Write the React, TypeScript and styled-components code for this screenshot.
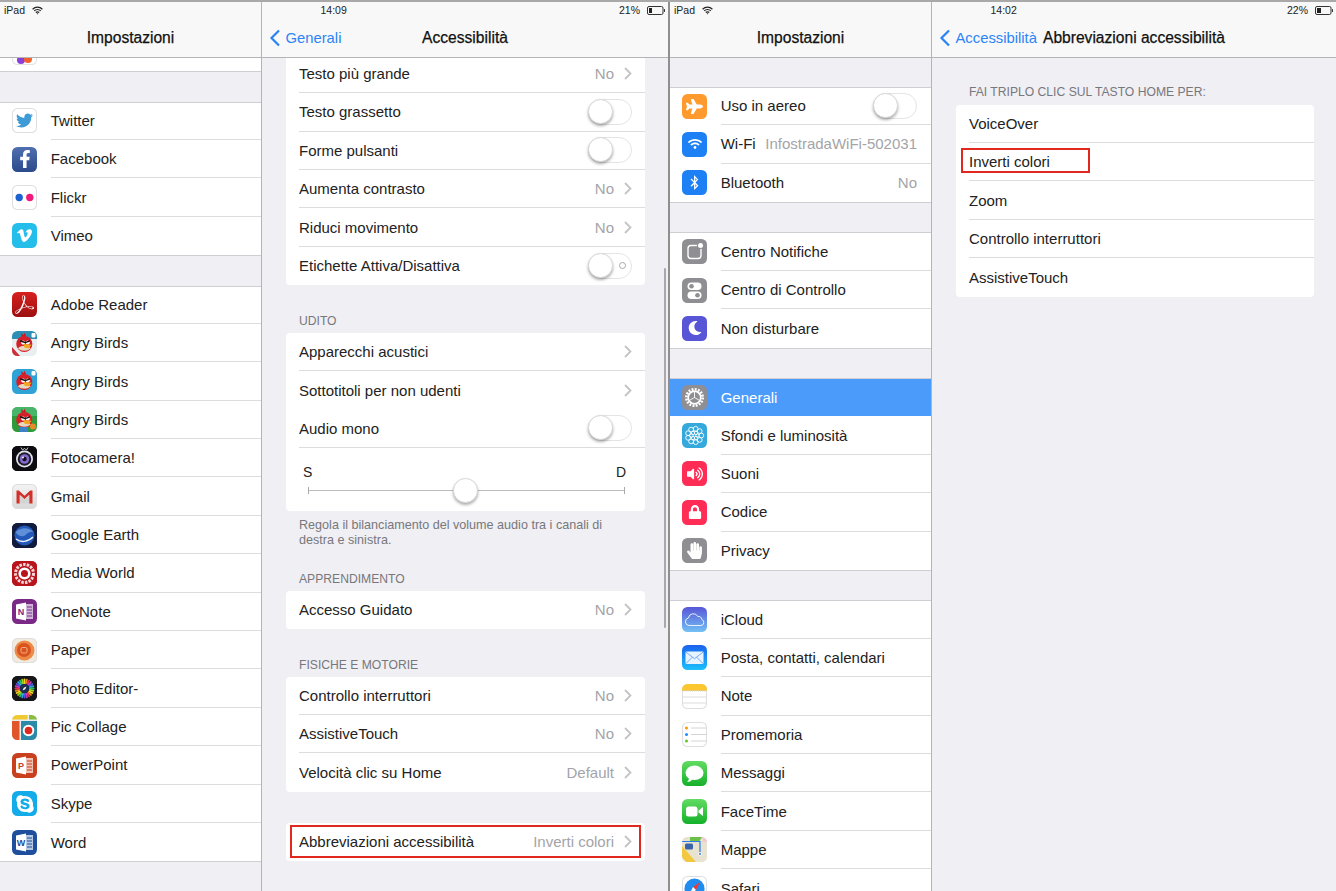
import React from 'react';
import styled, { createGlobalStyle } from 'styled-components';
import {
  FaBluetoothB,
  FaFacebookF,
  FaHandPaper,
  FaLock,
  FaMoon,
  FaPlane,
  FaSkype,
  FaTwitter,
  FaVimeoV,
  FaVolumeUp,
  FaWifi,
} from 'react-icons/fa';
import { SiAdobeacrobatreader } from 'react-icons/si';

const GlobalStyle = createGlobalStyle`
  html, body {
    margin: 0;
    height: 100%;
    overflow: hidden;
    background: #efeff4;
  }
  body {
    font-family: "Liberation Sans", Arial, sans-serif;
    color: #222;
    -webkit-font-smoothing: antialiased;
  }
`;

const Page = styled.div`
  display: flex;
  width: 1336px;
  height: 891px;
  border-top: 2px solid #a9a9a9;
  box-sizing: border-box;
  overflow: hidden;
`;

const Screen = styled.div<{ $divider?: boolean }>`
  position: relative;
  display: flex;
  width: ${(p) => (p.$divider ? '670px' : '666px')};
  height: 100%;
  flex: none;
  box-sizing: border-box;
  border-right: ${(p) => (p.$divider ? '2px solid #8f8f8f' : 'none')};
`;

const Sidebar = styled.div`
  width: 262px;
  flex: none;
  box-sizing: border-box;
  border-right: 1px solid #b4b4b6;
  overflow: hidden;
  display: flex;
  flex-direction: column;
`;

const Detail = styled.div`
  flex: 1;
  min-width: 0;
  overflow: hidden;
  display: flex;
  flex-direction: column;
`;

const Header = styled.header`
  position: relative;
  z-index: 2;
  height: 56px;
  flex: none;
  box-sizing: border-box;
  background: #f8f8f8;
  border-bottom: 1px solid #b4b4b6;
`;

const Status = styled.div<{ $side?: boolean }>`
  height: 16px;
  display: flex;
  align-items: center;
  justify-content: ${(p) => (p.$side ? 'flex-start' : 'space-between')};
  gap: 7px;
  padding: ${(p) => (p.$side ? '0 0 0 4px' : '0 3px 0 58.5px')};
  font-size: 10.5px;
  color: #222;
`;

const Battery = styled.span`
  display: flex;
  align-items: center;
  gap: 7px;
`;

const Nav = styled.div`
  height: 39px;
  display: grid;
  grid-template-columns: 1fr auto 1fr;
  align-items: center;
`;

const Back = styled.span`
  display: flex;
  align-items: center;
  gap: 4.5px;
  padding-left: 7px;
  font-size: 14.8px;
  color: #2b84f6;
  white-space: nowrap;
`;

const Title = styled.h1`
  grid-column: 2;
  margin: 0;
  font-size: 15.6px;
  font-weight: 400;
  -webkit-text-stroke: 0.25px #111;
  color: #111;
  white-space: nowrap;
`;

const Gap = styled.div<{ $h?: number }>`
  height: ${(p) => p.$h ?? 30.4}px;
  flex: none;
`;

const Group = styled.div`
  position: relative;
  background: #fff;
  flex: none;
  box-shadow: 0 1px 0 #cfcfd3;

  &::before {
    content: '';
    position: absolute;
    top: 0;
    left: 0;
    right: 0;
    height: 1px;
    background: #cfcfd3;
  }
`;

const ClippedRow = styled.div`
  height: 12.9px;
  background: #fff;
  flex: none;
  padding-left: 12.3px;
  display: flex;
  align-items: flex-end;
  overflow: hidden;
  box-shadow: 0 1px 0 #cfcfd3;
`;

const ClippedIcon = styled.div`
  width: 25px;
  height: 25px;
  flex: none;
  margin-bottom: 6px;
  border-radius: 5.5px;
  box-shadow: inset 0 0 0 1px #e2e2e2;
`;

const Row = styled.div<{ $selected?: boolean }>`
  height: 38.4px;
  display: flex;
  align-items: center;
  padding-left: 12.3px;
  gap: 13.4px;
  background: ${(p) => (p.$selected ? '#4b9bfb' : '#fff')};
  color: ${(p) => (p.$selected ? '#fff' : 'inherit')};
`;

const RowBody = styled.div<{ $plain?: boolean }>`
  flex: 1;
  min-width: 0;
  height: 100%;
  box-sizing: border-box;
  display: flex;
  align-items: center;
  justify-content: space-between;
  padding-right: 14px;
  font-size: 15px;
  white-space: nowrap;
  border-bottom: ${(p) => (p.$plain ? 'none' : '1.5px solid #dcdcde')};
`;

const Value = styled.span`
  color: #a4a4a8;
`;

const Tile = styled.div<{ $bg: string; $ink?: string; $line?: boolean }>`
  width: 25px;
  height: 25px;
  flex: none;
  display: flex;
  align-items: center;
  justify-content: center;
  overflow: hidden;
  color: ${(p) => p.$ink ?? '#fff'};
  background: ${(p) => p.$bg};
  border-radius: 5.5px;
  box-shadow: ${(p) => (p.$line ? 'inset 0 0 0 1px #dedee0' : 'none')};

  svg {
    display: block;
  }
`;

const Content = styled.div<{ $shift?: number; $end?: number }>`
  padding: 0 ${(p) => p.$end ?? 22}px 0 24px;
  margin-top: ${(p) => p.$shift ?? 0}px;
`;

const Card = styled.div`
  background: #fff;
  border-radius: 4px;
  overflow: hidden;
`;

const Cell = styled.div`
  position: relative;
  height: 38.4px;
  padding-left: 13px;
`;

const CellBody = styled.div<{ $last?: boolean }>`
  height: 100%;
  box-sizing: border-box;
  display: flex;
  align-items: center;
  justify-content: space-between;
  padding-right: 13px;
  font-size: 15px;
  border-bottom: ${(p) => (p.$last ? 'none' : '1.5px solid #dcdcde')};
`;

const Trailing = styled.span`
  display: flex;
  align-items: center;
  gap: 10px;
`;

const SectionLabel = styled.div<{ $h?: number; $pb?: number }>`
  height: ${(p) => p.$h ?? 47.6}px;
  box-sizing: border-box;
  display: flex;
  align-items: flex-end;
  padding: 0 0 ${(p) => p.$pb ?? 3.5}px 13px;
  font-size: 12.15px;
  line-height: 16px;
  color: #77777c;
  text-transform: uppercase;
`;

const Note = styled.div`
  padding: 7.5px 13px 0;
  margin-bottom: -3.8px;
  font-size: 12.6px;
  line-height: 14.4px;
  color: #77777c;
`;

const Track = styled.div`
  position: relative;
  width: 44px;
  height: 26px;
  margin-right: 0.5px;
  flex: none;
  box-sizing: border-box;
  border: 1.5px solid #e4e4e6;
  border-radius: 13px;
  background: #fff;
`;

const Knob = styled.span`
  position: absolute;
  top: -1px;
  left: -1px;
  width: 25px;
  height: 25px;
  box-sizing: border-box;
  border-radius: 50%;
  background: #fff;
  border: 1px solid #d8d8da;
  box-shadow: 0 2px 3px rgba(0, 0, 0, 0.32);
`;

const OffMark = styled.span`
  position: absolute;
  top: 8px;
  right: 5px;
  width: 7px;
  height: 7px;
  box-sizing: border-box;
  border: 1.2px solid #a8a8a8;
  border-radius: 50%;
`;

const BalanceCell = styled.div`
  height: 62.7px;
  box-sizing: border-box;
  padding: 16px 19px 0 17px;
`;

const BalanceEnds = styled.div`
  display: flex;
  justify-content: space-between;
  font-size: 14px;
  line-height: 16px;
`;

const BalanceTrack = styled.div`
  position: relative;
  margin: 10px 1px 0 5px;
  height: 1px;
  background: #bdbdbd;

  &::before,
  &::after {
    content: '';
    position: absolute;
    top: -3px;
    width: 1px;
    height: 7px;
    background: #aaa;
  }
  &::before {
    left: 0;
  }
  &::after {
    right: 0;
  }
`;

const BalanceKnob = styled.span`
  position: absolute;
  top: -12px;
  left: 145px;
  width: 25px;
  height: 25px;
  box-sizing: border-box;
  border-radius: 50%;
  background: #fff;
  border: 1px solid #d8d8da;
  box-shadow: 0 2px 3px rgba(0, 0, 0, 0.32);
`;

const Highlight = styled.div<{ $wide?: boolean }>`
  position: absolute;
  top: ${(p) => (p.$wide ? '2px' : '5px')};
  left: ${(p) => (p.$wide ? '4px' : '5px')};
  width: ${(p) => (p.$wide ? '351px' : '129px')};
  height: ${(p) => (p.$wide ? '33.5px' : '25px')};
  box-sizing: border-box;
  border: 2px solid #e0281e;
`;

const Scrollbar = styled.div`
  position: absolute;
  top: 266px;
  right: 2px;
  width: 2.5px;
  height: 360px;
  border-radius: 2px;
  background: #a9a9ad;
`;

const Wifi = () => (
  <svg width="11" height="9" viewBox="0 0 11 9" fill="none" stroke="#222" strokeWidth="1.2">
    <path d="M.6 3.2a7 7 0 0 1 9.8 0M2.2 4.9a4.7 4.7 0 0 1 6.6 0M3.8 6.5a2.4 2.4 0 0 1 3.4 0" />
    <path d="M5.5 8.6 4.6 7.6a1.3 1.3 0 0 1 1.8 0z" fill="#222" stroke="none" />
  </svg>
);

const BatteryIcon = ({ level }: { level: number }) => (
  <svg width="18" height="9" viewBox="0 0 18 9">
    <rect x=".5" y=".5" width="15.5" height="8" rx="1.5" fill="none" stroke="#333" />
    <rect x="2" y="2" width={level} height="5" fill="#222" />
    <path d="M17 3v3a1.5 1.5 0 0 0 0-3z" fill="#333" />
  </svg>
);

const BackChevron = () => (
  <svg width="12" height="18" viewBox="0 0 12 18" fill="none" stroke="#2b84f6" strokeWidth="2.2">
    <path d="M10 1.5 2.5 9l7.5 7.5" />
  </svg>
);

const Chevron = () => (
  <svg width="8" height="13" viewBox="0 0 8 13" fill="none" stroke="#c4c4c8" strokeWidth="1.8">
    <path d="m1 1 5.5 5.5L1 12" />
  </svg>
);

const Art = ({ children }: { children: React.ReactNode }) => (
  <svg width="25" height="25" viewBox="0 0 25 25">
    {children}
  </svg>
);

const Bird = () => (
  <g transform="translate(-1.5 -2) scale(1.15)">
    <path d="M10 7 9 3.5l2.500 2L12 3l1.500 3z" fill="#c8181e" />
    <circle cx="12" cy="13" r="7" fill="#d5202a" />
    <path d="M6.500 17a7 5 0 0 0 11 0 6 4 0 0 0-11 0z" fill="#e8d8c0" />
    <circle cx="11" cy="11.800" r="1.800" fill="#fff" />
    <circle cx="15" cy="11.800" r="1.800" fill="#fff" />
    <path d="M8.500 9.500 12.800 11l1-.2 3.200-1.300-.2 1.500-4 1.300-4.500-1.300z" fill="#201410" />
    <path d="m11.500 13 7 .8-3 3.200-3.500-1z" fill="#f0a820" />
  </g>
);

const BirdBlue = () => (
  <Art>
    <rect width="25" height="25" fill="#2fa3d6" />
    <Bird />
    <rect x="19.500" y="2" width="4" height="4.500" rx="1" fill="#fff" />
  </Art>
);

const BirdClassic = () => (
  <Art>
    <rect width="25" height="25" fill="#e9eef0" />
    <path d="M0 0h25v8H0z" fill="#2d8fb4" />
    <path d="M0 16 8 25H0z" fill="#c9303a" />
    <Bird />
    <rect x="19.500" y="2" width="4" height="4.500" rx="1" fill="#fff" />
  </Art>
);

const BirdRio = () => (
  <Art>
    <rect width="25" height="25" fill="#2f9a3c" />
    <path d="M0 0h25v9H0z" fill="#47b56a" />
    <Bird />
    <path d="M8 25v-5h8v5z" fill="#3d82c8" />
    <circle cx="21" cy="19.500" r="3" fill="#e88a2a" />
  </Art>
);

const Fotocamera = () => (
  <Art>
    <rect width="25" height="25" fill="#0c0c10" />
    <circle cx="12.500" cy="13" r="8.500" fill="#e4e4ec" />
    <circle cx="12.500" cy="13" r="6.800" fill="#1c1c28" />
    <circle cx="12.500" cy="13" r="4.800" fill="#8468cc" />
    <circle cx="12.500" cy="13" r="2.200" fill="#101018" />
    <circle cx="11" cy="11.500" r=".9" fill="#fff" />
    <path d="m9 1.500 1.500 2.500L12.500 2.500l2 1.500L16 1.500" fill="none" stroke="#ddd" strokeWidth=".9" />
  </Art>
);

const Gmail = () => (
  <Art>
    <path d="M4.500 6.500v13h3.300V11l4.700 4.200L17.200 11v8.500h3.300v-13h-2.300l-5.700 5.200-5.700-5.200z" fill="#d3302a" />
    <path d="M7.800 11v8.500h9.400V11l-4.700 4.200z" fill="#d4d4d4" />
  </Art>
);

const Earth = () => (
  <Art>
    <rect width="25" height="25" fill="#101b3e" />
    <circle cx="12.500" cy="12.500" r="10" fill="#2258b8" />
    <path d="M3.500 9c6-5 13-5 18 0-3-1-6 1-8 3s-7 2-10-3z" fill="#5f8fd8" />
    <path d="M4 16c5 4 12 3 17-2" fill="none" stroke="#eaf1fb" strokeWidth="1.400" />
  </Art>
);

const MediaWorld = () => (
  <Art>
    <rect width="25" height="25" fill="#b8141c" />
    <circle cx="12.500" cy="12.500" r="9" fill="none" stroke="#f6d8d8" strokeWidth="3" strokeDasharray="2.500 1.200" />
    <circle cx="12.500" cy="12.500" r="4.800" fill="none" stroke="#fff" strokeWidth="2.600" />
  </Art>
);

const OfficeDoc = ({ letter, page, ink }: { letter: string; page: string; ink: string }) => (
  <Art>
    <path d="M10 5h11v15H10z" fill={page} opacity=".9" />
    <path d="M15 8h5M15 11h5M15 14h5M15 17h5" stroke={ink} strokeWidth="1" />
    <path d="M4 5.500 14 3.500v18l-10-2z" fill="#fff" />
    <text x="9" y="16" textAnchor="middle" fontSize="9" fontWeight="700" fontFamily="Liberation Sans" fill={ink}>
      {letter}
    </text>
  </Art>
);

const Paper = () => (
  <Art>
    <circle cx="12.500" cy="12.500" r="10" fill="#ec8a4a" />
    <circle cx="12" cy="12" r="7" fill="#d9531f" />
    <rect x="9" y="9.500" width="6" height="5.500" rx="1.500" fill="none" stroke="#f4b28a" />
  </Art>
);

const PhotoEditor = () => {
  const colors = ['#f4d820', '#f08a20', '#e8304a', '#c83cc0', '#5a55e0', '#26a8e8', '#30c060', '#a0d820'];
  const petals = Array.from({ length: 24 }, (_, i) => i * 15);
  return (
    <Art>
      <rect width="25" height="25" fill="#15151a" />
      {petals.map((deg, i) => (
        <rect
          key={deg}
          x="11.600"
          y="2.500"
          width="1.800"
          height="5.500"
          rx=".9"
          fill={colors[i % colors.length]}
          transform={`rotate(${deg} 12.500 12.500)`}
        />
      ))}
      <circle cx="12.500" cy="12.500" r="4.600" fill="#1b2f50" />
      <path d="m10.500 14.500 1.300-2.700 2.700-1.300-1.300 2.700z" fill="#fff" />
    </Art>
  );
};

const PicCollage = () => (
  <Art>
    <rect width="25" height="25" fill="#e8eef0" />
    <path d="M0 0h15.500v4.500H0z" fill="#f0c830" />
    <path d="M17 0h8v4.500h-8z" fill="#8abc40" />
    <path d="M0 6h7.500v19H0z" fill="#e0552a" />
    <path d="M9 6h16v19H9z" fill="#2a8aa8" />
    <circle cx="16.500" cy="15.500" r="5.800" fill="#fff" />
    <circle cx="16.500" cy="15.500" r="3.800" fill="#dd2a20" />
  </Art>
);

const Flickr = () => (
  <Art>
    <circle cx="7.200" cy="12.500" r="3.700" fill="#1c62d0" />
    <circle cx="17.800" cy="12.500" r="3.700" fill="#f01a7c" />
  </Art>
);

const Notifications = () => (
  <Art>
    <rect x="6" y="6.500" width="13" height="13" rx="3" fill="none" stroke="#fff" strokeWidth="1.400" />
    <circle cx="18.500" cy="6.500" r="3.600" fill="#8e8e93" />
    <circle cx="18.500" cy="6.500" r="2.500" fill="#fff" />
  </Art>
);

const ControlCenter = () => (
  <Art>
    <rect x="5.500" y="4.500" width="14" height="7.500" rx="3.750" fill="#fff" />
    <circle cx="9.500" cy="8.250" r="2.300" fill="#8e8e93" />
    <rect x="5.500" y="13.500" width="14" height="7.500" rx="3.750" fill="#fff" />
    <circle cx="15.500" cy="17.250" r="2.300" fill="#8e8e93" />
  </Art>
);

const Gear = () => (
  <Art>
    <circle cx="12.500" cy="12.500" r="8.200" fill="none" stroke="#fff" strokeWidth="2.600" strokeDasharray="1.900 1.320" />
    <circle cx="12.500" cy="12.500" r="6.300" fill="none" stroke="#fff" strokeWidth="1.700" />
    <path d="M12.500 12.500V6.500M12.500 12.500l5.200 3M12.500 12.500l-5.200 3" stroke="#fff" strokeWidth=".9" />
  </Art>
);

const Wallpaper = () => {
  const ring = Array.from({ length: 9 }, (_, i) => (i * Math.PI * 2) / 9);
  return (
    <Art>
      {ring.map((a) => (
        <circle
          key={a}
          cx={12.5 + Math.cos(a) * 6.8}
          cy={12.5 + Math.sin(a) * 6.8}
          r="2.400"
          fill="none"
          stroke="#fff"
          strokeWidth=".9"
        />
      ))}
      {ring.slice(0, 6).map((a) => (
        <circle
          key={a}
          cx={12.5 + Math.cos(a * 1.5) * 3}
          cy={12.5 + Math.sin(a * 1.5) * 3}
          r="1.700"
          fill="none"
          stroke="#fff"
          strokeWidth=".9"
        />
      ))}
    </Art>
  );
};

const Cloud = () => (
  <Art>
    <path
      d="M7 18.500a3.800 3.800 0 0 1-.6-7.500 5 5 0 0 1 9.400-1.500 3.300 3.300 0 0 1 4 3 3.100 3.100 0 0 1-.8 6z"
      fill="none"
      stroke="#e8f2ff"
      strokeWidth="1"
    />
  </Art>
);

const Envelope = () => (
  <Art>
    <rect x="3.500" y="6.500" width="18" height="12.500" rx="1" fill="#e8f3ff" />
    <path d="m3.800 7 8.700 6.700L21.200 7M3.800 18.700l6.500-6.500M21.200 18.700l-6.500-6.500" fill="none" stroke="#4f9cf5" strokeWidth=".8" />
  </Art>
);

const Notes = () => (
  <Art>
    <path d="M0 0h25v7H0z" fill="#fbc62e" />
    <path d="M0 7h25" stroke="#d8d8d8" strokeDasharray="1 1" />
    <path d="M0 13h25M0 19h25" stroke="#dcdcdc" />
  </Art>
);

const Reminders = () => (
  <Art>
    <circle cx="4.500" cy="6" r="1.500" fill="#ff9500" />
    <circle cx="4.500" cy="12.500" r="1.500" fill="#1e90f5" />
    <circle cx="4.500" cy="19" r="1.500" fill="#62c828" />
    <path d="M9 6h16M9 12.500h16M9 19h16" stroke="#d4d4d6" />
  </Art>
);

const Bubble = () => (
  <Art>
    <ellipse cx="12.500" cy="11.800" rx="9" ry="7.300" fill="#fff" />
    <path d="M7 16.500c0 2-.8 3.500-2.200 4.500 2.200 0 4.200-.8 5.700-2.500z" fill="#fff" />
  </Art>
);

const Camera = () => (
  <Art>
    <rect x="4" y="7.500" width="11.500" height="10" rx="2.500" fill="#fff" />
    <path d="m16.500 11.500 4.500-3.500v9l-4.500-3.500z" fill="#fff" />
  </Art>
);

const Maps = () => (
  <Art>
    <rect width="25" height="25" fill="#e8e2d0" />
    <path d="M8 0h12l-3 5H8z" fill="#6cc048" />
    <path d="M20 0h5v5h-4z" fill="#f4c8d0" />
    <path d="M0 9 14 25H4L0 20z" fill="#f2c840" />
    <path d="M0 4.500h18v11" fill="none" stroke="#2a7ae8" strokeWidth="1.200" />
    <rect x="3" y="6.500" width="8" height="6" rx="1.500" fill="#3b63a8" />
    <circle cx="18" cy="17" r="1.800" fill="#fff" />
    <circle cx="18" cy="17" r="1" fill="#2a7ae8" />
  </Art>
);

const Safari = () => (
  <Art>
    <circle cx="12.500" cy="12.500" r="10" fill="#1f8cf0" />
    <path d="m18 6-4 8-3-3z" fill="#f03a30" />
    <path d="m7 19 4-8 3 3z" fill="#fff" />
  </Art>
);

type Entry = { label: string; icon: React.ReactNode; value?: string };

const grey = '#8e8e93';
const glyph = (Icon: React.ComponentType<{ size?: number }>, bg: string, size = 14) => (
  <Tile $bg={bg}>
    <Icon size={size} />
  </Tile>
);
const art = (node: React.ReactNode, bg: string, line = false) => (
  <Tile $bg={bg} $line={line}>
    {node}
  </Tile>
);

const socialApps: Entry[] = [
  { label: 'Twitter', icon: <Tile $bg="#fff" $ink="#3f9bd6" $line><FaTwitter size={17} /></Tile> },
  { label: 'Facebook', icon: glyph(FaFacebookF, 'linear-gradient(#4f6fb0, #2b4a8c)', 18) },
  { label: 'Flickr', icon: art(<Flickr />, '#fff', true) },
  { label: 'Vimeo', icon: glyph(FaVimeoV, '#25bde9', 17) },
];

const installedApps: Entry[] = [
  { label: 'Adobe Reader', icon: glyph(SiAdobeacrobatreader, 'linear-gradient(#d8211f, #9c0f10)', 19) },
  { label: 'Angry Birds', icon: art(<BirdClassic />, '#fff') },
  { label: 'Angry Birds', icon: art(<BirdBlue />, '#fff') },
  { label: 'Angry Birds', icon: art(<BirdRio />, '#fff') },
  { label: 'Fotocamera!', icon: art(<Fotocamera />, '#000') },
  { label: 'Gmail', icon: art(<Gmail />, 'linear-gradient(#f4f4f4, #d8d8d8)', true) },
  { label: 'Google Earth', icon: art(<Earth />, '#101b3e') },
  { label: 'Media World', icon: art(<MediaWorld />, '#b8141c') },
  { label: 'OneNote', icon: art(<OfficeDoc letter="N" page="#d9c6e2" ink="#7a2a86" />, '#7a2a86') },
  { label: 'Paper', icon: art(<Paper />, '#f0ebdd', true) },
  { label: 'Photo Editor-', icon: art(<PhotoEditor />, '#15151a') },
  { label: 'Pic Collage', icon: art(<PicCollage />, '#e8eef0') },
  { label: 'PowerPoint', icon: art(<OfficeDoc letter="P" page="#f3d2c6" ink="#c8401e" />, '#c8401e') },
  { label: 'Skype', icon: glyph(FaSkype, '#14ace8', 20) },
  { label: 'Word', icon: art(<OfficeDoc letter="W" page="#c8d6ea" ink="#1f4f9c" />, '#1f4f9c') },
];

const connectivity: Entry[] = [
  { label: 'Uso in aereo', icon: glyph(FaPlane, '#ff9a2e', 17) },
  { label: 'Wi-Fi', icon: glyph(FaWifi, '#1e80f5', 14), value: 'InfostradaWiFi-502031' },
  { label: 'Bluetooth', icon: glyph(FaBluetoothB, '#1e80f5', 15), value: 'No' },
];

const systemApps: Entry[] = [
  { label: 'Centro Notifiche', icon: art(<Notifications />, grey) },
  { label: 'Centro di Controllo', icon: art(<ControlCenter />, grey) },
  { label: 'Non disturbare', icon: glyph(FaMoon, '#5856d6', 14) },
];

const generalApps: Entry[] = [
  { label: 'Generali', icon: art(<Gear />, grey) },
  { label: 'Sfondi e luminosità', icon: art(<Wallpaper />, '#35a9dc') },
  { label: 'Suoni', icon: glyph(FaVolumeUp, '#ff2d55', 16) },
  { label: 'Codice', icon: glyph(FaLock, '#ff2d55', 14) },
  { label: 'Privacy', icon: glyph(FaHandPaper, grey, 17) },
];

const cloudApps: Entry[] = [
  { label: 'iCloud', icon: art(<Cloud />, 'linear-gradient(#5856d6, #72c0f5)') },
  { label: 'Posta, contatti, calendari', icon: art(<Envelope />, 'linear-gradient(#1a62ee, #1cc0fb)') },
  { label: 'Note', icon: art(<Notes />, '#fff', true) },
  { label: 'Promemoria', icon: art(<Reminders />, '#fff', true) },
  { label: 'Messaggi', icon: art(<Bubble />, 'linear-gradient(#62dc62, #14b02a)') },
  { label: 'FaceTime', icon: art(<Camera />, 'linear-gradient(#62dc62, #14b02a)') },
  { label: 'Mappe', icon: art(<Maps />, '#e8e2d0') },
  { label: 'Safari', icon: art(<Safari />, '#fff', true) },
];

const Toggle = ({ mark }: { mark?: boolean }) => (
  <Track>
    <Knob />
    {mark && <OffMark />}
  </Track>
);

const SettingRows = ({ items, selected, trailing }: { items: Entry[]; selected?: string; trailing?: Record<string, React.ReactNode> }) => (
  <Group>
    {items.map((item, i) => (
      <Row key={`${item.label}${i}`} $selected={item.label === selected}>
        {item.icon}
        <RowBody $plain={i === items.length - 1 || item.label === selected}>
          {item.label}
          {item.value && <Value>{item.value}</Value>}
          {trailing?.[item.label]}
        </RowBody>
      </Row>
    ))}
  </Group>
);

type Line = { label: string; value?: string; toggle?: boolean; mark?: boolean };

const Lines = ({ items }: { items: Line[] }) => (
  <>
    {items.map((line, i) => (
      <Cell key={line.label}>
        <CellBody $last={i === items.length - 1}>
          {line.label}
          {line.toggle ? (
            <Toggle mark={line.mark} />
          ) : (
            <Trailing>
              {line.value && <Value>{line.value}</Value>}
              <Chevron />
            </Trailing>
          )}
        </CellBody>
      </Cell>
    ))}
  </>
);

const DisplayLines: Line[] = [
  { label: 'Testo più grande', value: 'No' },
  { label: 'Testo grassetto', toggle: true },
  { label: 'Forme pulsanti', toggle: true },
  { label: 'Aumenta contrasto', value: 'No' },
  { label: 'Riduci movimento', value: 'No' },
  { label: 'Etichette Attiva/Disattiva', toggle: true, mark: true },
];

const HearingLines: Line[] = [
  { label: 'Apparecchi acustici' },
  { label: 'Sottotitoli per non udenti' },
];

const MotorLines: Line[] = [
  { label: 'Controllo interruttori', value: 'No' },
  { label: 'AssistiveTouch', value: 'No' },
  { label: 'Velocità clic su Home', value: 'Default' },
];

const shortcutItems = ['VoiceOver', 'Inverti colori', 'Zoom', 'Controllo interruttori', 'AssistiveTouch'];

const App = () => (
  <Page>
    <GlobalStyle />
    <Screen $divider>
      <Sidebar>
        <Header>
          <Status $side>
            iPad <Wifi />
          </Status>
          <Nav>
            <Title>Impostazioni</Title>
          </Nav>
        </Header>
        <ClippedRow>
          <ClippedIcon>
            <svg width="25" height="25" viewBox="0 0 25 25">
              <circle cx="9" cy="20" r="4" fill="#8c3fd8" />
              <circle cx="16" cy="19" r="4" fill="#f4622a" />
            </svg>
          </ClippedIcon>
        </ClippedRow>
        <Gap $h={30.7} />
        <SettingRows items={socialApps} />
        <Gap />
        <SettingRows items={installedApps} />
      </Sidebar>
      <Detail>
        <Header>
          <Status>
            <span>14:09</span>
            <Battery>
              21% <BatteryIcon level={3} />
            </Battery>
          </Status>
          <Nav>
            <Back>
              <BackChevron /> Generali
            </Back>
            <Title>Accessibilità</Title>
          </Nav>
        </Header>
        <Content $shift={-3.2} $end={23}>
          <Card>
            <Lines items={DisplayLines} />
          </Card>
          <SectionLabel>Udito</SectionLabel>
          <Card>
            <Lines items={HearingLines} />
            <Cell>
              <CellBody>
                Audio mono
                <Toggle />
              </CellBody>
            </Cell>
            <BalanceCell>
              <BalanceEnds>
                <span>S</span>
                <span>D</span>
              </BalanceEnds>
              <BalanceTrack>
                <BalanceKnob />
              </BalanceTrack>
            </BalanceCell>
          </Card>
          <Note>Regola il bilanciamento del volume audio tra i canali di destra e sinistra.</Note>
          <SectionLabel>Apprendimento</SectionLabel>
          <Card>
            <Lines items={[{ label: 'Accesso Guidato', value: 'No' }]} />
          </Card>
          <SectionLabel>Fisiche e motorie</SectionLabel>
          <Card>
            <Lines items={MotorLines} />
          </Card>
          <Gap $h={30.8} />
          <Card>
            <Cell>
              <CellBody $last>
                Abbreviazioni accessibilità
                <Trailing>
                  <Value>Inverti colori</Value>
                  <Chevron />
                </Trailing>
              </CellBody>
              <Highlight $wide />
            </Cell>
          </Card>
        </Content>
        <Scrollbar />
      </Detail>
    </Screen>
    <Screen>
      <Sidebar>
        <Header>
          <Status $side>
            iPad <Wifi />
          </Status>
          <Nav>
            <Title>Impostazioni</Title>
          </Nav>
        </Header>
        <Gap $h={28.9} />
        <SettingRows items={connectivity} trailing={{ 'Uso in aereo': <Toggle /> }} />
        <Gap />
        <SettingRows items={systemApps} />
        <Gap />
        <SettingRows items={generalApps} selected="Generali" />
        <Gap />
        <SettingRows items={cloudApps} />
      </Sidebar>
      <Detail>
        <Header>
          <Status>
            <span>14:02</span>
            <Battery>
              22% <BatteryIcon level={4} />
            </Battery>
          </Status>
          <Nav>
            <Back>
              <BackChevron /> Accessibilità
            </Back>
            <Title>Abbreviazioni accessibilità</Title>
          </Nav>
        </Header>
        <Content>
          <SectionLabel $h={46.6} $pb={4.6}>Fai triplo clic sul tasto Home per:</SectionLabel>
          <Card>
            {shortcutItems.map((item, i) => (
              <Cell key={item}>
                <CellBody $last={i === shortcutItems.length - 1}>{item}</CellBody>
                {item === 'Inverti colori' && <Highlight />}
              </Cell>
            ))}
          </Card>
        </Content>
      </Detail>
    </Screen>
  </Page>
);

export default App;
